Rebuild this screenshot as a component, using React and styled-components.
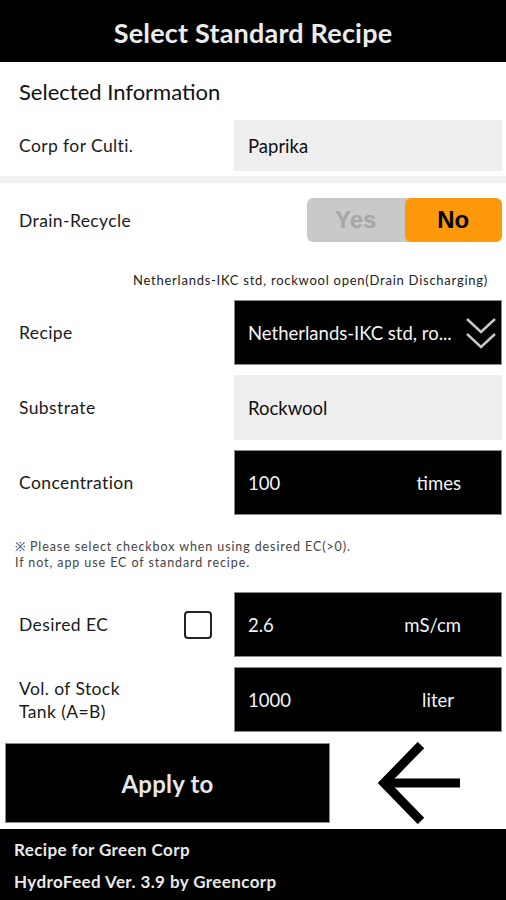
import React, { useState } from "react";
import styled, { createGlobalStyle } from "styled-components";

const GlobalStyle = createGlobalStyle`
  * { box-sizing: border-box; }
  body {
    margin: 0;
    background: #fff;
    font-family: "Lato", "Open Sans", sans-serif;
    color: #111;
  }
`;

export default function App() {
    const [drainRecycle, setDrainRecycle] = useState(false);
    const [useEc, setUseEc] = useState(false);

    return (
        <Screen>
            <GlobalStyle />
            <Header>Select Standard Recipe</Header>
            <SectionTitle>Selected Information</SectionTitle>

            <Row height={51}>
                <Label>Corp for Culti.</Label>
                <Field>Paprika</Field>
            </Row>

            <Divider />

            <ToggleRow>
                <Label>Drain-Recycle</Label>
                <Toggle>
                    <ToggleOption active={drainRecycle} onClick={() => setDrainRecycle(true)}>Yes</ToggleOption>
                    <ToggleOption active={!drainRecycle} onClick={() => setDrainRecycle(false)}>No</ToggleOption>
                </Toggle>
            </ToggleRow>

            <Caption>Netherlands-IKC std, rockwool open(Drain Discharging)</Caption>

            <Rows>
                <Row>
                    <Label>Recipe</Label>
                    <Field dark>
                        <Value>Netherlands-IKC std, ro...</Value>
                        <Chevrons viewBox="0 0 32 34" width="32" height="34">
                            <polyline points="2,3 16,16 30,3" />
                            <polyline points="2,18 16,31 30,18" />
                        </Chevrons>
                    </Field>
                </Row>
                <Row>
                    <Label>Substrate</Label>
                    <Field>Rockwool</Field>
                </Row>
                <Row>
                    <Label>Concentration</Label>
                    <Field dark>
                        <Value>100</Value>
                        <Unit>times</Unit>
                    </Field>
                </Row>
            </Rows>

            <Note>
                ※ Please select checkbox when using desired EC(&gt;0).<br />
                If not, app use EC of standard recipe.
            </Note>

            <Rows>
                <Row>
                    <Label>Desired EC</Label>
                    <CheckBox checked={useEc} onClick={() => setUseEc(!useEc)} />
                    <Field dark>
                        <Value>2.6</Value>
                        <Unit>mS/cm</Unit>
                    </Field>
                </Row>
                <Row>
                    <Label>Vol. of Stock<br />Tank (A=B)</Label>
                    <Field dark>
                        <Value>1000</Value>
                        <Unit pad={47}>liter</Unit>
                    </Field>
                </Row>
            </Rows>

            <ActionBar>
                <ApplyButton>Apply to</ApplyButton>
                <BackButton aria-label="back">
                    <svg viewBox="0 0 84 82" width="84" height="82">
                        <polyline points="44,3 7,41 44,79" fill="none" stroke="#000" strokeWidth="9" />
                        <line x1="7" y1="41" x2="83" y2="41" stroke="#000" strokeWidth="9" />
                    </svg>
                </BackButton>
            </ActionBar>

            <Footer>
                <span>Recipe for Green Corp</span>
                <span>HydroFeed Ver. 3.9 by Greencorp</span>
            </Footer>
        </Screen>
    );
}

const Screen = styled.div`
    width: 506px;
    height: 900px;
    display: flex;
    flex-direction: column;
    overflow: hidden;
`;

const Header = styled.div`
    height: 62px;
    background: #000;
    color: #ececec;
    font-size: 27px;
    font-weight: 700;
    display: flex;
    align-items: center;
    justify-content: center;
    padding-top: 2px;
    letter-spacing: 0.2px;
`;

const SectionTitle = styled.div`
    height: 58px;
    display: flex;
    align-items: center;
    padding-left: 19px;
    font-size: 22px;
    color: #111;
`;

const Rows = styled.div`
    display: flex;
    flex-direction: column;
    gap: 10px;
`;

const Row = styled.div`
    height: ${props => props.height || 65}px;
    display: flex;
    align-items: center;
    padding-right: 4px;
`;

const Label = styled.div`
    flex: 1;
    padding-left: 19px;
    font-size: 17.5px;
    line-height: 23px;
    letter-spacing: 0.4px;
    color: #1a1a1a;
`;

const Field = styled.div`
    width: 268px;
    height: 100%;
    display: flex;
    align-items: center;
    padding-left: 13px;
    font-size: 18.5px;
    background: ${props => props.dark ? "#000" : "#eeeeee"};
    color: ${props => props.dark ? "#f4f4f4" : "#111"};
    border: 1px solid ${props => props.dark ? "#8a8a8a" : "#eeeeee"};
`;

const Value = styled.span`
    flex: 1;
    white-space: nowrap;
`;

const Unit = styled.span`
    padding-right: ${props => props.pad || 40}px;
`;

const Chevrons = styled.svg`
    margin-right: 4px;
    fill: none;
    stroke: #c8c8c8;
    stroke-width: 2.4;
`;

const Divider = styled.div`
    height: 7px;
    margin-top: 5px;
    background: #f1f1f1;
`;

const ToggleRow = styled.div`
    display: flex;
    align-items: center;
    margin-top: 15px;
    padding-right: 4px;
`;

const Toggle = styled.div`
    width: 195px;
    height: 44px;
    display: flex;
    border-radius: 6px;
    overflow: hidden;
    background: #c9c9c9;
`;

const ToggleOption = styled.button`
    flex: 1;
    border: none;
    padding: 0;
    font-family: "Liberation Sans", Arial, sans-serif;
    font-size: 24px;
    font-weight: 700;
    cursor: pointer;
    border-radius: 6px;
    background: ${props => props.active ? "#fd990a" : "transparent"};
    color: ${props => props.active ? "#000" : "#a6a6a6"};
`;

const Caption = styled.div`
    text-align: right;
    padding: 0 18px 0 0;
    margin: 31px 0 13px;
    font-size: 13px;
    line-height: 14px;
    letter-spacing: 0.75px;
    color: #222;
    white-space: nowrap;
`;

const Note = styled.div`
    margin: 24px 0 21px;
    padding-left: 15px;
    font-size: 12.5px;
    line-height: 16px;
    letter-spacing: 0.9px;
    color: #444;
`;

const CheckBox = styled.div`
    width: 28px;
    height: 28px;
    margin-right: 22px;
    border: 2.5px solid #222;
    border-radius: 4px;
    background: ${props => props.checked ? "#222" : "#fff"};
    cursor: pointer;
`;

const ActionBar = styled.div`
    display: flex;
    align-items: center;
    margin-top: 10px;
    padding-left: 5px;
`;

const ApplyButton = styled.button`
    width: 325px;
    height: 80px;
    border: 1px solid #8a8a8a;
    background: #000;
    color: #e6e6e6;
    font-family: "Lato", sans-serif;
    font-size: 24px;
    font-weight: 700;
    letter-spacing: 0.2px;
    cursor: pointer;
`;

const BackButton = styled.button`
    margin-left: 47px;
    padding: 0;
    border: none;
    background: none;
    display: flex;
    cursor: pointer;
`;

const Footer = styled.div`
    margin-top: 5px;
    flex: 1;
    background: #000;
    color: #e8e8e8;
    display: flex;
    flex-direction: column;
    justify-content: space-around;
    padding: 4px 0 2px 14px;
    font-size: 17px;
    font-weight: 700;
    letter-spacing: 0.4px;
`;
